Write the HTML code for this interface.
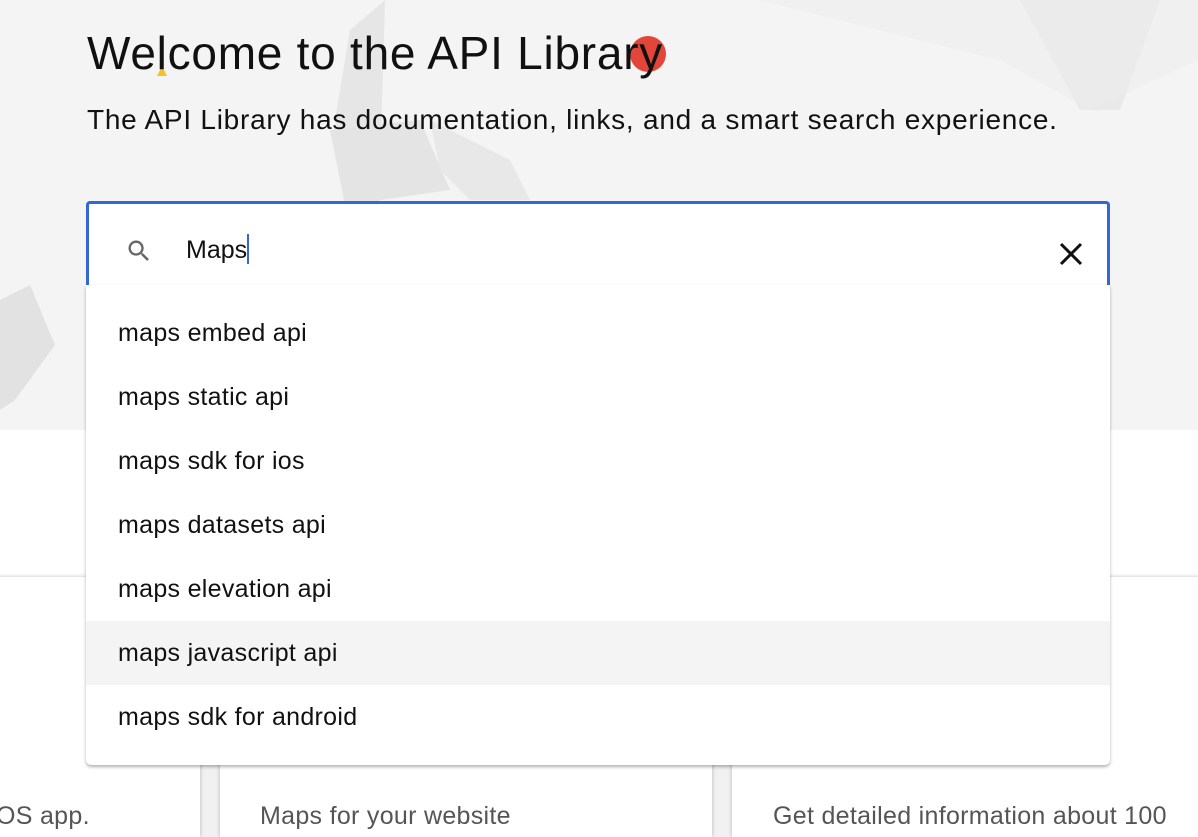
<!DOCTYPE html>
<html><head><style>
body{margin:0;width:1198px;height:830px;overflow:hidden;background:#fff;font-family:"Liberation Sans",sans-serif;position:relative}
.hero{position:absolute;left:0;top:0;width:1198px;height:430px;background:#f4f4f4;overflow:hidden}
.abs{position:absolute}
h1{position:absolute;left:87px;top:26px;margin:0;font-size:46px;font-weight:400;color:#111;letter-spacing:0.75px}
.sub{position:absolute;left:87px;top:104px;font-size:28px;color:#111;letter-spacing:0.75px}
.card{position:absolute;top:577px;height:260px;background:#fff;box-shadow:0 0 4px rgba(0,0,0,.25)}
.ct{position:absolute;top:802px;font-size:25px;color:#555;letter-spacing:0.3px}
.search{position:absolute;left:86px;top:201px;width:1018px;height:84px;border:3px solid #3367d6;border-bottom:none;border-radius:4px 4px 0 0;background:#fff}
.dd{position:absolute;left:86px;top:285px;width:1024px;height:480px;background:#fff;border-radius:0 0 5px 5px;box-shadow:0 2px 3px rgba(0,0,0,.3)}
.it{position:absolute;left:0;width:1024px;height:64px;line-height:64px;padding-left:32px;box-sizing:border-box;font-size:25px;color:#111;letter-spacing:0.3px}
</style></head><body>
<div class="hero">
<svg class="abs" style="left:0;top:0" width="1198" height="430">
<polygon points="1020,0 1160,0 1120,110 1080,110" fill="#e9e9e9"/>
<polygon points="760,0 1198,0 1198,60 1090,110 1000,60" fill="#ececec" opacity=".6"/>
<polygon points="350,30 385,0 380,170 360,200 335,120" fill="#e6e6e6"/>
<polygon points="330,130 420,120 450,190 380,200 350,230" fill="#e4e4e4"/>
<polygon points="430,120 510,160 530,200 470,200 440,170" fill="#e8e8e8"/>
<polygon points="0,300 30,285 55,345 15,400 0,410" fill="#e2e2e2"/>
</svg>
<div class="abs" style="left:630px;top:36px;width:36px;height:36px;border-radius:50%;background:#e2463a"></div>
<div class="abs" style="left:157px;top:66px;width:0;height:0;border-left:5px solid transparent;border-right:5px solid transparent;border-bottom:10px solid #f5c02a"></div>
<h1>Welcome to the API Library</h1>
<div class="sub">The API Library has documentation, links, and a smart search experience.</div>
</div>
<div class="abs" style="left:0;top:577px;width:1198px;height:260px;background:#f1f1f1"></div>
<div class="card" style="left:-10px;width:210px"></div>
<div class="card" style="left:220px;width:492px"></div>
<div class="card" style="left:732px;width:480px"></div>
<div class="ct" style="left:-4px">OS app.</div>
<div class="ct" style="left:260px">Maps for your website</div>
<div class="ct" style="left:773px">Get detailed information about 100</div>
<div class="search">
<svg class="abs" style="left:36px;top:33px" width="28" height="28" viewBox="0 0 24 24"><path fill="#666" d="M15.5 14h-.79l-.28-.27A6.47 6.47 0 0016 9.5 6.5 6.5 0 109.5 16c1.61 0 3.09-.59 4.23-1.57l.27.28v.79l5 4.99L20.49 19l-4.99-5zm-6 0C7.01 14 5 11.99 5 9.5S7.01 5 9.5 5 14 7.01 14 9.5 11.99 14 9.5 14z"/></svg>
<div class="abs" style="left:97px;top:30px;font-size:25px;color:#111">Maps<span style="display:inline-block;width:2px;height:30px;background:#3367d6;vertical-align:-6px"></span></div>
<svg class="abs" style="left:969px;top:37px" width="26" height="26" viewBox="0 0 26 26"><path d="M3 3L23 23M23 3L3 23" stroke="#111" stroke-width="3"/></svg>
</div>
<div class="dd">
<div class="it" style="top:16px">maps embed api</div>
<div class="it" style="top:80px">maps static api</div>
<div class="it" style="top:144px">maps sdk for ios</div>
<div class="it" style="top:208px">maps datasets api</div>
<div class="it" style="top:272px">maps elevation api</div>
<div class="it" style="top:336px;background:#f4f4f4">maps javascript api</div>
<div class="it" style="top:400px">maps sdk for android</div>
</div>
</body></html>
